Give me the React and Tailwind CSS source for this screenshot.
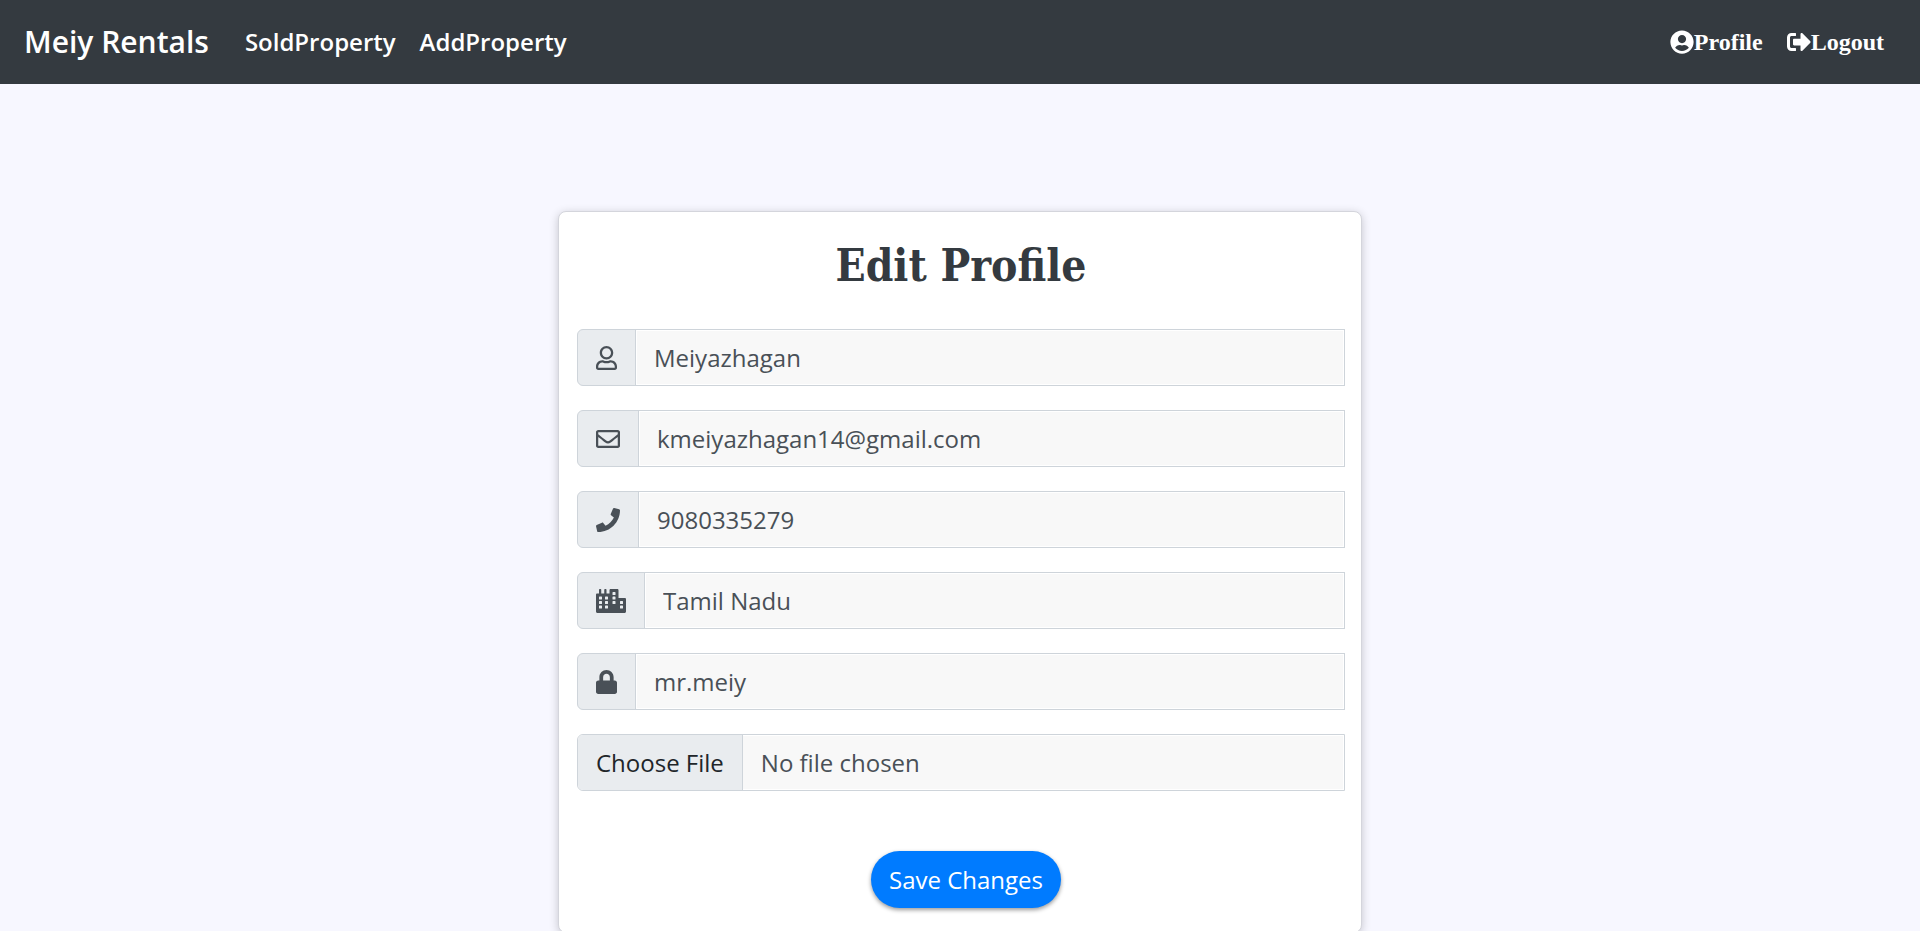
import { FaRegUser, FaRegEnvelope, FaPhone, FaCity, FaLock, FaUserCircle, FaSignOutAlt } from "react-icons/fa";

const fields = [
  { id: "name", label: "Name", type: "text", value: "Meiyazhagan", Icon: FaRegUser, iconClass: "w-[21px] h-6" },
  { id: "email", label: "Email", type: "email", value: "kmeiyazhagan14@gmail.com", Icon: FaRegEnvelope, iconClass: "w-6 h-6" },
  { id: "phone", label: "Phone", type: "tel", value: "9080335279", Icon: FaPhone, iconClass: "w-6 h-6" },
  { id: "city", label: "City", type: "text", value: "Tamil Nadu", Icon: FaCity, iconClass: "w-[30px] h-6" },
  { id: "username", label: "Username", type: "text", value: "mr.meiy", Icon: FaLock, iconClass: "w-[21px] h-6" },
];

function Navbar() {
  return (
    <nav className="flex h-[84px] items-center justify-between bg-[#343a40] pl-6 pr-9 font-bold text-white">
      <div className="flex items-center font-semibold">
        <a href="#home" className="mr-9 text-[30px] leading-9">Meiy Rentals</a>
        <div className="flex items-center gap-6 text-2xl">
          <a href="#sold">SoldProperty</a>
          <a href="#add">AddProperty</a>
        </div>
      </div>
      <div className="flex items-center gap-6 font-['Liberation_Serif',serif] text-2xl">
        <a href="#profile" className="flex items-center">
          <FaUserCircle className="h-6 w-6" />
          Profile
        </a>
        <a href="#logout" className="flex items-center">
          <FaSignOutAlt className="h-6 w-6" />
          Logout
        </a>
      </div>
    </nav>
  );
}

function Field({ id, label, type, value, Icon, iconClass }) {
  return (
    <div className="flex h-[57px]">
      <label
        htmlFor={id}
        aria-label={label}
        className="flex items-center rounded-l-md border border-[#ced4da] bg-[#e9ecef] px-[18px]"
      >
        <Icon className={iconClass} />
      </label>
      <input
        id={id}
        type={type}
        defaultValue={value}
        className="-ml-px min-w-0 flex-1 border border-[#ced4da] bg-[#f8f8f8] px-[18px] shadow-[inset_0_0_0_1px_#fff] outline-none"
      />
    </div>
  );
}

export default function App() {
  return (
    <div className="min-h-screen bg-[#f7f7ff] font-['Comic_Sans_MS','Open_Sans',sans-serif] text-2xl text-[#495057]">
      <Navbar />
      <main className="flex justify-center pt-[127px]">
        <form
          onSubmit={(e) => e.preventDefault()}
          className="w-full max-w-[804px] rounded-lg border border-[#d4d5dc] bg-white pb-6 pl-[18px] pr-4 shadow-[0_2px_10px_rgba(0,0,0,0.2)]"
        >
          <h1 className="pt-6 text-center font-['Roboto_Slab','DejaVu_Serif_Condensed','DejaVu_Serif',serif] text-[44px] font-bold leading-[60px] text-[#343a40]">
            Edit Profile
          </h1>
          <div className="mt-[33px] flex flex-col gap-6">
            {fields.map((f) => (
              <Field key={f.id} {...f} />
            ))}
            <input
              type="file"
              aria-label="Profile picture"
              className="h-[57px] w-full rounded-l-md border border-[#ced4da] bg-[#f8f8f8] leading-[55px] shadow-[inset_0_0_0_1px_#fff] file:mr-[18px] file:h-[55px] file:border-0 file:border-r file:border-solid file:border-[#ced4da] file:bg-[#e9ecef] file:px-[18px] file:text-[#212529]"
            />
          </div>
          <div className="mt-[60px] flex justify-center pl-2.5">
            <button
              type="submit"
              className="h-[57px] rounded-full bg-[#007bff] px-[18px] text-white shadow-[0_2px_4px_rgba(0,0,0,0.4)]"
            >
              Save Changes
            </button>
          </div>
        </form>
      </main>
    </div>
  );
}
